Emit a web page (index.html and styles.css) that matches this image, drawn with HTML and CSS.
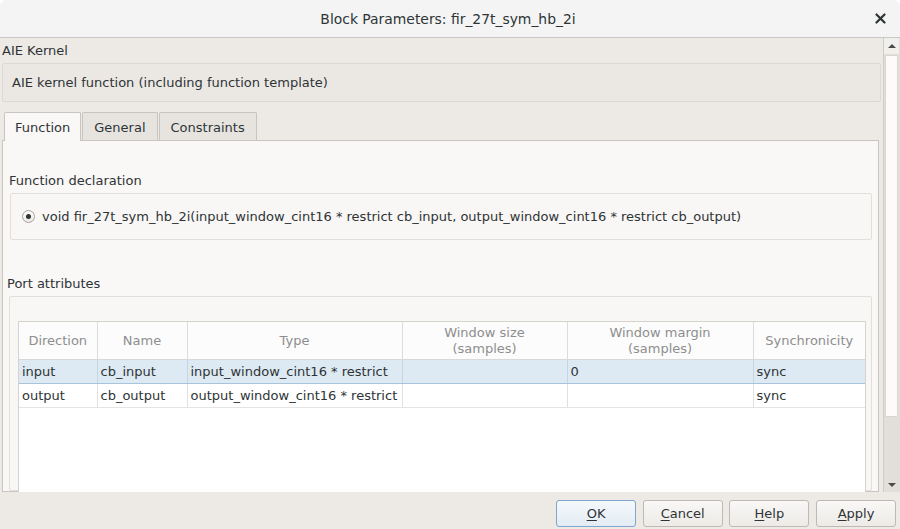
FILE: index.html
```html
<!DOCTYPE html>
<html>
<head>
<meta charset="utf-8">
<link rel="stylesheet" href="styles.css">
</head>
<body>
<div class="window">
  <header class="titlebar">
    <span></span>
    <span class="title">Block Parameters: fir_27t_sym_hb_2i</span>
    <span class="close">
      <svg width="11" height="11" viewBox="0 0 11 11"><path d="M1.5 1.5 L9.5 9.5 M9.5 1.5 L1.5 9.5" stroke="#2e3436" stroke-width="2.2" stroke-linecap="round"/></svg>
    </span>
  </header>
  <div class="main">
    <div class="content">
      <div class="section-label">AIE Kernel</div>
      <div class="desc-box">AIE kernel function (including function template)</div>
      <div class="tabs">
        <div class="tab active">Function</div>
        <div class="tab">General</div>
        <div class="tab">Constraints</div>
      </div>
      <div class="pane">
        <div class="group-label">Function declaration</div>
        <div class="decl-box">
          <span class="radio"><span class="dot"></span></span>
          <span class="decl-text">void fir_27t_sym_hb_2i(input_window_cint16 * restrict cb_input, output_window_cint16 * restrict cb_output)</span>
        </div>
        <div class="group-label port-label">Port attributes</div>
        <div class="port-box">
          <div class="table-wrap">
            <table class="ports">
              <colgroup>
                <col class="c-dir"><col class="c-name"><col class="c-type"><col class="c-wsize"><col class="c-wmargin"><col class="c-sync">
              </colgroup>
              <thead>
                <tr>
                  <th>Direction</th>
                  <th>Name</th>
                  <th>Type</th>
                  <th>Window size<br>(samples)</th>
                  <th>Window margin<br>(samples)</th>
                  <th>Synchronicity</th>
                </tr>
              </thead>
              <tbody>
                <tr class="selected">
                  <td>input</td>
                  <td>cb_input</td>
                  <td>input_window_cint16 * restrict</td>
                  <td></td>
                  <td>0</td>
                  <td>sync</td>
                </tr>
                <tr>
                  <td>output</td>
                  <td>cb_output</td>
                  <td>output_window_cint16 * restrict</td>
                  <td></td>
                  <td></td>
                  <td>sync</td>
                </tr>
              </tbody>
            </table>
          </div>
        </div>
      </div>
    </div>
    <div class="scrollbar">
      <div class="sb-btn"><span class="arrow-up"></span></div>
      <div class="sb-thumb"></div>
      <div class="sb-track"></div>
      <div class="sb-btn sb-down"><span class="arrow-down"></span></div>
    </div>
  </div>
  <footer class="buttons">
    <button class="btn default"><u>O</u>K</button>
    <button class="btn"><u>C</u>ancel</button>
    <button class="btn"><u>H</u>elp</button>
    <button class="btn"><u>A</u>pply</button>
  </footer>
</div>
</body>
</html>
```

FILE: styles.css
```css
html, body {
  margin: 0;
  padding: 0;
}

body {
  width: 900px;
  height: 529px;
  overflow: hidden;
  background: #ffffff;
  font-family: "DejaVu Sans", "Liberation Sans", sans-serif;
  font-size: 13px;
  color: #2e3436;
}

.window {
  display: flex;
  flex-direction: column;
  width: 900px;
  height: 529px;
  background: #edeae6;
  border-radius: 7px 7px 0 0;
  overflow: hidden;
}

.titlebar {
  flex: none;
  height: 37px;
  display: grid;
  grid-template-columns: 1fr auto 1fr;
  align-items: center;
  background: #f4f4f4;
  border-bottom: 1px solid #c8c8c8;
}

.title {
  font-size: 13.9px;
  color: #2e3436;
  margin-left: -4px;
}

.close {
  justify-self: end;
  margin-right: 14px;
  display: flex;
  align-items: center;
  height: 11px;
}

.main {
  flex: none;
  height: 454px;
  display: flex;
  min-height: 0;
}

.content {
  flex: 1;
  min-width: 0;
  overflow: hidden;
  display: flex;
  flex-direction: column;
  padding: 5px 2px 0 2px;
}

.section-label {
  line-height: 16px;
  height: 16px;
}

.desc-box {
  margin-top: 4px;
  height: 37px;
  display: flex;
  align-items: center;
  padding-left: 9px;
  background: #ebe8e4;
  border: 1px solid #dcd8d3;
  border-radius: 2px;
}

.tabs {
  margin-top: 10px;
  display: flex;
  padding-left: 2px;
  position: relative;
  z-index: 1;
}

.tab {
  height: 27px;
  line-height: 29px;
  padding: 0 11px;
  border: 1px solid #c8c4bf;
  border-bottom: none;
  background: #e7e4e0;
  border-radius: 2px 2px 0 0;
  color: #2e3436;
}

.tab + .tab {
  margin-left: 1px;
}

.tab.active {
  background: #faf8f6;
  height: 28px;
  margin-bottom: -1px;
  padding: 0 10px;
}

.pane {
  flex: 1;
  margin-right: 2px;
  border: 1px solid #c9c5c0;
  background: #faf8f6;
  padding: 0 6px;
  display: flex;
  flex-direction: column;
  min-height: 0;
}

.group-label {
  margin-top: 32px;
  line-height: 16px;
  height: 16px;
}

.decl-box {
  margin-top: 4px;
  margin-left: 1px;
  height: 45px;
  display: flex;
  align-items: center;
  padding-left: 11px;
  background: #f9f7f5;
  border: 1px solid #e2dfdb;
  border-radius: 2px;
}

.radio {
  width: 11px;
  height: 11px;
  border: 1px solid #a7a39e;
  border-radius: 50%;
  background: linear-gradient(#fdfdfc, #ebe8e5);
  display: flex;
  align-items: center;
  justify-content: center;
  margin-right: 7px;
  flex: none;
}

.dot {
  width: 5px;
  height: 5px;
  border-radius: 50%;
  background: #2e3436;
}

.port-label {
  margin-top: 36px;
  margin-left: -2px;
}

.port-box {
  margin-top: 4px;
  flex: 1;
  border: 1px solid #e2dfdb;
  border-radius: 2px;
  background: #f9f7f5;
  padding: 24px 10px 0 8px;
  min-height: 0;
}

.table-wrap {
  height: 200px;
  width: 846px;
  background: #ffffff;
  border: 1px solid #d6d3cf;
}

.ports {
  table-layout: fixed;
  border-collapse: collapse;
  width: 846px;
  font-size: 13px;
}

.c-dir { width: 78px; }
.c-name { width: 90px; }
.c-type { width: 215px; }
.c-wsize { width: 165px; }
.c-wmargin { width: 186px; }
.c-sync { width: 112px; }

.ports th {
  height: 36px;
  font-weight: normal;
  color: #8e8e8e;
  line-height: 16px;
  text-align: center;
  border-right: 1px solid #dcdcdc;
  border-bottom: 1px solid #d8d8d8;
  background: #fcfcfc;
  padding: 1px 0 0 0;
}

.ports td {
  height: 23px;
  padding: 0 0 0 3px;
  border-right: 1px solid #e0e0e0;
  border-bottom: 1px solid #e4e4e4;
  white-space: nowrap;
  overflow: hidden;
  color: #2e3436;
}

.ports th:last-child,
.ports td:last-child {
  border-right: none;
}

.ports tr.selected td {
  background: #dde9f3;
  border-top: 1px solid #a8c4dc;
  border-bottom: 1px solid #a8c4dc;
  border-right-color: #c4d6e6;
}

.scrollbar {
  flex: none;
  width: 15px;
  border-left: 1px solid #cfcbc6;
  background: #e2dfdb;
  display: flex;
  flex-direction: column;
  padding-right: 1px;
}

.sb-btn {
  height: 16px;
  flex: none;
  display: flex;
  align-items: center;
  justify-content: center;
  background: #f1efec;
}

.sb-down {
  height: 14px;
  background: #e2dfdb;
}

.arrow-up {
  width: 0;
  height: 0;
  border-left: 4px solid transparent;
  border-right: 4px solid transparent;
  border-bottom: 4px solid #4a4a4a;
}

.arrow-down {
  width: 0;
  height: 0;
  border-left: 4px solid transparent;
  border-right: 4px solid transparent;
  border-top: 4px solid #4a4a4a;
}

.sb-thumb {
  height: 360px;
  flex: none;
  margin: 1px 1px 0 1px;
  background: #fcfbfa;
  border: 1px solid #d9d5d0;
  border-radius: 1px;
}

.sb-track {
  flex: 1;
}

.buttons {
  flex: none;
  height: 35px;
  border-bottom: 2px solid #c5c2bd;
  display: flex;
  justify-content: flex-end;
  align-items: flex-start;
  gap: 6.67px;
  padding: 8px 4px 0 0;
}

.btn {
  width: 80px;
  height: 27px;
  border: 1px solid #bdb9b4;
  border-radius: 3px;
  background: linear-gradient(#f9f8f6, #edeae7);
  font-family: "DejaVu Sans", "Liberation Sans", sans-serif;
  font-size: 13px;
  color: #2e3436;
  padding: 0;
  box-sizing: border-box;
}

.btn.default {
  border-color: #7fa6ce;
  background: linear-gradient(#f4f8fb, #e3ecf4);
}

.btn u {
  text-decoration-thickness: 1px;
  text-underline-offset: 2px;
}
```
